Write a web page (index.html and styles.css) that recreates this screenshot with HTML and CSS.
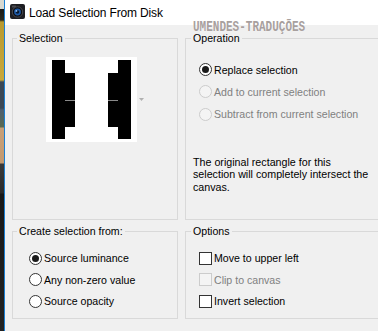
FILE: index.html
```html
<!DOCTYPE html>
<html>
<head>
<meta charset="utf-8">
<link rel="stylesheet" href="styles.css">
</head>
<body>
<div class="screen">
  <div class="desk"></div>
  <div class="window">
    <div class="titlebar">
      <svg class="appicon" width="15" height="15" viewBox="0 0 15 15">
        <rect x="0" y="0" width="15" height="15" rx="2" fill="#1e1e22"/>
        <rect x="2" y="1.5" width="4" height="2" rx="0.5" fill="#4a4a50"/>
        <circle cx="7.5" cy="8" r="5.2" fill="#0c0c10" stroke="#55585e" stroke-width="0.8"/>
        <circle cx="7.5" cy="8" r="3.4" fill="#1d5aa8"/>
        <circle cx="7.5" cy="8" r="1.8" fill="#0a1a30"/>
        <circle cx="6.4" cy="6.9" r="0.9" fill="#8fc4ff"/>
      </svg>
      <span class="title">Load Selection From Disk</span>
    </div>
    <div class="body">
      <fieldset class="group left top">
        <legend>Selection</legend>
        <div class="preview-row">
          <svg class="preview" width="91" height="85" viewBox="0 0 91 85">
            <rect x="0" y="0" width="91" height="85" fill="#ffffff"/>
            <rect x="6" y="3" width="13" height="79" fill="#000"/>
            <rect x="19" y="16" width="10" height="54" fill="#000"/>
            <rect x="62" y="16" width="10" height="54" fill="#000"/>
            <rect x="72" y="3" width="13" height="79" fill="#000"/>
            <rect x="19" y="43" width="10" height="1" fill="#8a8a8a"/>
            <rect x="62" y="43" width="10" height="1" fill="#8a8a8a"/>
          </svg>
          <svg class="arrow" width="5" height="3" viewBox="0 0 5 3">
            <polygon points="0,0 5,0 2.5,3" fill="#b0b0b0"/>
          </svg>
        </div>
      </fieldset>
      <fieldset class="group right top">
        <legend>Operation</legend>
        <div class="opts op-opts">
          <div class="opt"><span class="radio checked"></span><span>Replace selection</span></div>
          <div class="opt disabled"><span class="radio"></span><span>Add to current selection</span></div>
          <div class="opt disabled"><span class="radio"></span><span>Subtract from current selection</span></div>
        </div>
        <p class="note">The original rectangle for this<br>selection will completely intersect the<br>canvas.</p>
      </fieldset>
      <fieldset class="group left bottom">
        <legend>Create selection from:</legend>
        <div class="opts create-opts">
          <div class="opt"><span class="radio checked"></span><span>Source luminance</span></div>
          <div class="opt"><span class="radio"></span><span>Any non-zero value</span></div>
          <div class="opt"><span class="radio"></span><span>Source opacity</span></div>
        </div>
      </fieldset>
      <fieldset class="group right bottom">
        <legend>Options</legend>
        <div class="opts options-opts">
          <div class="opt"><span class="check"></span><span>Move to upper left</span></div>
          <div class="opt disabled"><span class="check"></span><span>Clip to canvas</span></div>
          <div class="opt"><span class="check"></span><span>Invert selection</span></div>
        </div>
      </fieldset>
    </div>
    <div class="watermark">UMENDES-TRADUÇÕES</div>
  </div>
</div>
</body>
</html>
```
FILE: styles.css
```css
html, body {
  margin: 0;
  padding: 0;
}
body {
  font-family: "Liberation Sans", Arial, sans-serif;
  font-size: 10.6px;
  color: #000;
  background: #f0f0f0;
  overflow: hidden;
}
.screen {
  display: flex;
  width: 378px;
  height: 331px;
  overflow: hidden;
}
.desk {
  flex: none;
  width: 4px;
  background: linear-gradient(to bottom,
    #d8d8d0 0, #d8d8d0 9px, #1a1a1a 9px, #2a2a20 20px,
    #b89a30 22px, #c9a83a 80px, #3b4855 82px, #3b4855 108px,
    #4f6070 110px, #5a6a50 127px, #c8a078 128px, #c49a70 163px,
    #3a3a3a 164px, #2a2a2a 193px, #181818 194px, #222 331px);
}
.window {
  flex: 1;
  min-width: 0;
  position: relative;
  display: flex;
  flex-direction: column;
  border-left: 1px solid #1a7fd4;
  overflow: hidden;
}
.titlebar {
  flex: none;
  height: 25px;
  background: #fff;
  display: flex;
  align-items: center;
  padding-left: 5px;
}
.appicon {
  display: block;
  flex: none;
  margin-top: -2px;
}
.title {
  margin-left: 4px;
  font-size: 12px;
  letter-spacing: -0.15px;
  white-space: nowrap;
}
.body {
  flex: 1;
  display: grid;
  grid-template-columns: 166px 210px;
  grid-template-rows: 188px 94px;
  column-gap: 7px;
  row-gap: 5px;
  padding: 7px 0 0 7px;
  align-content: start;
}
.group {
  margin: 0;
  padding: 0;
  min-width: 0;
  border: 1px solid #d9d9d9;
}
.group legend {
  padding: 0 2px;
  line-height: 13px;
  white-space: nowrap;
}
.group.left legend {
  margin-left: 4px;
}
.group.right legend {
  margin-left: 5px;
}
.preview-row {
  display: flex;
  align-items: center;
  margin: 12px 0 0 33px;
}
.preview {
  display: block;
}
.arrow {
  display: block;
  margin-left: 2px;
}
.opts {
  display: flex;
  flex-direction: column;
}
.op-opts {
  margin: 13.6px 0 0 13px;
}
.op-opts .opt {
  height: 22.2px;
}
.create-opts {
  margin: 9.6px 0 0 16px;
}
.options-opts {
  margin: 9.6px 0 0 13px;
}
.create-opts .opt,
.options-opts .opt {
  height: 21.4px;
}
.opt {
  display: flex;
  align-items: center;
  white-space: nowrap;
}
.opt.disabled {
  color: #808080;
}
.radio,
.check {
  flex: none;
  box-sizing: border-box;
  width: 13px;
  height: 13px;
  border: 1px solid #333;
  background: #fff;
  margin-right: 2px;
  display: flex;
  align-items: center;
  justify-content: center;
}
.radio {
  border-radius: 50%;
}
.radio.checked::after {
  content: "";
  width: 7px;
  height: 7px;
  border-radius: 50%;
  background: #1a1a1a;
}
.opt.disabled .radio,
.opt.disabled .check {
  border-color: #cccccc;
  background: #f4f4f4;
}
.note {
  margin: 30.4px 0 0 7px;
  font-size: 10.7px;
  line-height: 12.75px;
  white-space: nowrap;
}
.watermark {
  position: absolute;
  left: 188px;
  top: 22px;
  font-family: "Liberation Mono", monospace;
  font-weight: bold;
  font-size: 11px;
  line-height: 9px;
  color: #a8a09e;
  text-shadow: 0 0 1px #fff;
  transform: scaleY(1.25);
  transform-origin: 0 0;
  white-space: nowrap;
}
```
